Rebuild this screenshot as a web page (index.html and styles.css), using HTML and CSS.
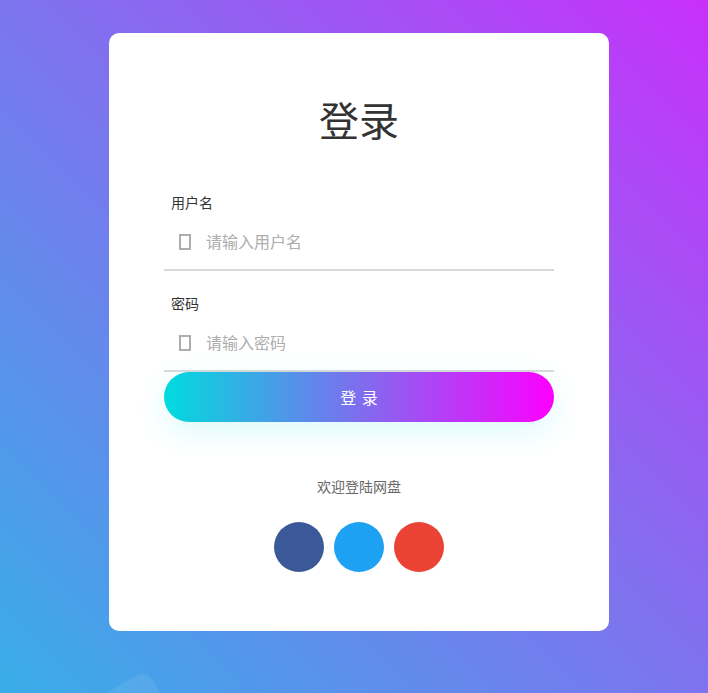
FILE: index.html
```html
<!DOCTYPE html>
<html lang="zh-CN">
<head>
<meta charset="utf-8">
<title>登录</title>
<link rel="stylesheet" href="styles.css">
</head>
<body>
<main class="page">
  <svg class="blob" width="120" height="20" viewBox="0 0 120 20" aria-hidden="true">
    <path d="M7 20 L35 3 Q43 -1 49 3 Q53 7 60 20 Z" fill="#ffffff" fill-opacity="0.08"/>
  </svg>
  <form class="card">
    <h1 class="title">登录</h1>
    <div class="field">
      <label class="label">用户名</label>
      <div class="input-row"><span class="tofu"></span><span class="placeholder">请输入用户名</span></div>
    </div>
    <div class="field">
      <label class="label">密码</label>
      <div class="input-row"><span class="tofu"></span><span class="placeholder">请输入密码</span></div>
    </div>
    <button class="submit" type="button">登 录</button>
    <p class="welcome">欢迎登陆网盘</p>
    <div class="socials">
      <span class="social fb"></span>
      <span class="social tw"></span>
      <span class="social gp"></span>
    </div>
  </form>
</main>
</body>
</html>
```
FILE: styles.css
```css
* { box-sizing: border-box; margin: 0; padding: 0; }
html, body { height: 100%; }
body { font-family: "Noto Sans CJK SC", "Noto Sans", sans-serif; overflow: hidden; }
.page {
  position: relative;
  width: 718px;
  height: 693px;
  overflow: hidden;
  padding-top: 33px;
  display: flex;
  justify-content: center;
  align-items: flex-start;
  background: linear-gradient(-135deg, #c92ffb 0%, #7d74ee 50%, #38aee8 100%);
}
.blob { position: absolute; left: 100px; top: 673px; }
.card {
  position: relative;
  width: 500px;
  height: 598px;
  background: #fff;
  border-radius: 10px;
  padding: 62px 55px 0;
}
.title {
  font-size: 40px;
  font-weight: 400;
  line-height: 48px;
  color: #333;
  text-align: center;
  margin-bottom: 50px;
}
.field { height: 78px; border-bottom: 2px solid #d9d9d9; }
.field + .field { margin-top: 23px; }
.label {
  display: block;
  font-size: 14px;
  line-height: 18px;
  color: #333;
  padding-left: 7px;
  margin-bottom: 3px;
}
.input-row {
  display: flex;
  align-items: center;
  height: 55px;
  padding-left: 15px;
}
.tofu {
  width: 12px;
  height: 16px;
  border: 2px solid #adadad;
  margin-right: 15px;
}
.placeholder { font-size: 16px; color: #adadad; margin-bottom: 2px; }
.submit {
  display: block;
  width: 100%;
  height: 50px;
  border: 0;
  border-radius: 25px;
  background: linear-gradient(to right, #00dbde, #fc00ff);
  box-shadow: 0 10px 30px 0 rgba(87, 230, 245, 0.2);
  color: #fff;
  font: inherit;
  font-size: 16px;
  line-height: 50px;
  word-spacing: 2px;
}
.welcome {
  margin-top: 53px;
  text-align: center;
  font-size: 14px;
  line-height: 22px;
  color: #666;
}
.socials { display: flex; justify-content: center; gap: 10px; margin-top: 25px; }
.social { width: 50px; height: 50px; border-radius: 50%; }
.fb { background: #3b5998; }
.tw { background: #1da1f2; }
.gp { background: #ea4335; }
```
